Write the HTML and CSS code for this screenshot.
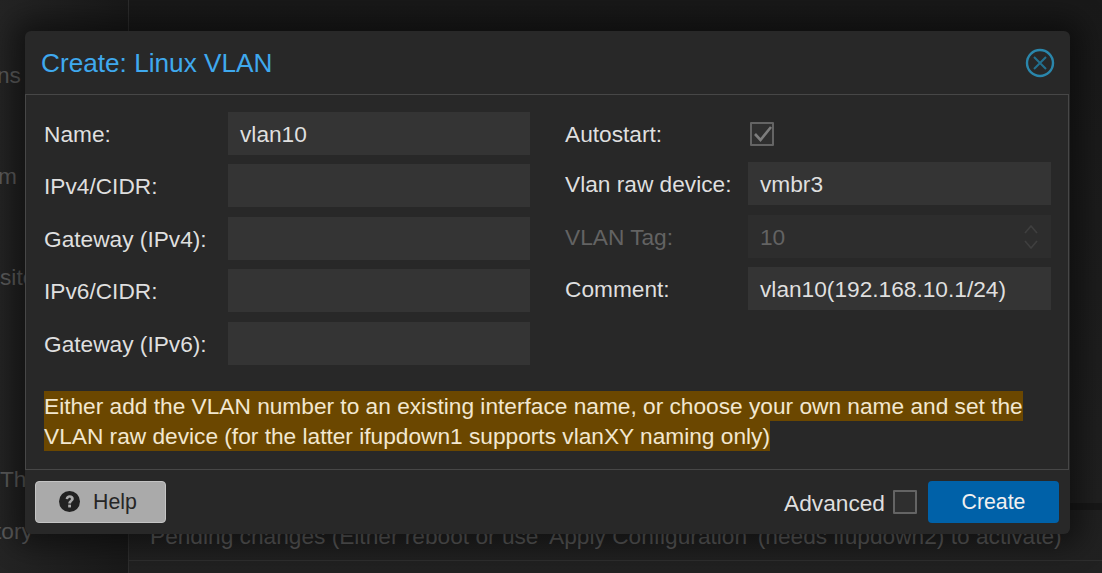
FILE: index.html
```html
<!DOCTYPE html>
<html lang="en">
  <head>
    <meta charset="UTF-8" />
    <title>Create: Linux VLAN</title>
    <link rel="stylesheet" href="styles.css">
  </head>

  <body>
    <div class="backdrop">
      <div class="side">
        <div class="side-text t1">ns</div>
        <div class="side-text t2">m</div>
        <div class="side-text t3">sito</div>
        <div class="side-text t4">Th</div>
        <div class="side-text t5">tory</div>
      </div>
      <div class="main">
        <div class="toolbar-line"></div>
        <div class="pending">Pending changes (Either reboot or use 'Apply Configuration' (needs ifupdown2) to activate)</div>
      </div>
    </div>

    <div class="window">
      <div class="header">
        <span class="title">Create: Linux VLAN</span>
        <svg class="close" viewBox="0 0 30 30" width="30" height="30">
          <circle cx="15" cy="15" r="13" fill="none" stroke="#2a86ab" stroke-width="2.4" />
          <path d="M9 9 L21 21 M21 9 L9 21" fill="none" stroke="#23708f" stroke-width="2" />
        </svg>
      </div>

      <div class="body">
        <div class="columns">
          <div class="column left">
            <div class="row">
              <label>Name:</label>
              <div class="input">vlan10</div>
            </div>
            <div class="row">
              <label>IPv4/CIDR:</label>
              <div class="input"></div>
            </div>
            <div class="row">
              <label>Gateway (IPv4):</label>
              <div class="input"></div>
            </div>
            <div class="row">
              <label>IPv6/CIDR:</label>
              <div class="input"></div>
            </div>
            <div class="row">
              <label>Gateway (IPv6):</label>
              <div class="input"></div>
            </div>
          </div>

          <div class="column right">
            <div class="row check-row">
              <label>Autostart:</label>
              <div class="checkbox">
                <svg viewBox="0 0 24 24" width="24" height="24">
                  <path d="M5 12 L10.5 18 L21 5" fill="none" stroke="#7d7d7d" stroke-width="2.6" />
                </svg>
              </div>
            </div>
            <div class="row">
              <label>Vlan raw device:</label>
              <div class="input">vmbr3</div>
            </div>
            <div class="row disabled">
              <label>VLAN Tag:</label>
              <div class="input">
                10
                <svg class="spin" viewBox="0 0 16 30" width="16" height="30">
                  <path d="M2 11 L8 4 L14 11 M2 19 L8 26 L14 19" fill="none" stroke="#3f3f3f" stroke-width="1.6" />
                </svg>
              </div>
            </div>
            <div class="row">
              <label>Comment:</label>
              <div class="input">vlan10(192.168.10.1/24)</div>
            </div>
          </div>
        </div>

        <p class="warning"><span>Either add the VLAN number to an existing interface name, or choose your own name and set the VLAN raw device (for the latter ifupdown1 supports vlanXY naming only)</span></p>
      </div>

      <div class="footer">
        <button class="btn help">
          <svg viewBox="0 0 24 24" width="21" height="21">
            <circle cx="12" cy="12" r="12" fill="#222" />
            <path d="M7.6 9.2 C7.6 6.4 9.8 4.8 12.3 4.8 C15 4.8 16.9 6.4 16.9 8.8 C16.9 11.6 13.8 11.8 13.8 14.4 H10.6 C10.6 10.8 13.6 10.6 13.6 9 C13.6 8.2 13 7.7 12.1 7.7 C11.1 7.7 10.6 8.3 10.4 9.5 Z" fill="#aaa" />
            <rect x="10.5" y="15.6" width="3.2" height="3.2" fill="#aaa" />
          </svg>
          <span>Help</span>
        </button>
        <div class="actions">
          <span class="adv-label">Advanced</span>
          <div class="checkbox empty"></div>
          <button class="btn create">Create</button>
        </div>
      </div>
    </div>
  </body>
</html>
```

FILE: styles.css
```css
* {
  margin: 0;
  padding: 0;
  box-sizing: border-box;
  font-family: "Liberation Sans", Arial, sans-serif;
}

html,
body {
  width: 1102px;
  height: 573px;
  overflow: hidden;
}

body {
  background-color: #1d1d1d;
  font-size: 22.7px;
  color: #dfdfdf;
}

.backdrop {
  display: flex;
  height: 573px;
}

.side {
  position: relative;
  width: 129px;
  border-right: 1px solid #2d2d2d;
  background: linear-gradient(90deg, #242424, #191919);
}

.side-text {
  position: absolute;
  color: #5c5c5c;
}

.t1 { top: 62px; left: -3px; }
.t2 { top: 163px; left: -2px; }
.t3 { top: 264px; left: 0; }
.t4 { top: 466px; left: 0; }
.t5 { top: 518px; left: -5px; }

.main {
  position: relative;
  flex: 1;
  display: flex;
  align-items: flex-end;
  padding-bottom: 12px;
  background: linear-gradient(180deg, #191919, #212121);
}

.toolbar-line {
  position: absolute;
  left: 0;
  right: 0;
  top: 503px;
  height: 7px;
  background-color: #181818;
}

.pending {
  position: relative;
  width: 100%;
  height: 38px;
  padding: 0 0 0 21px;
  border-bottom: 1px solid #2e2e2e;
  color: #595959;
  white-space: nowrap;
}

.window {
  position: absolute;
  left: 25px;
  top: 31px;
  width: 1045px;
  height: 503px;
  background-color: #282828;
  border-radius: 6px;
  box-shadow: 0 0 28px 12px rgba(0, 0, 0, 0.45);
  display: flex;
  flex-direction: column;
}

.header {
  height: 63px;
  flex-shrink: 0;
  display: flex;
  align-items: center;
  justify-content: space-between;
  padding: 0 15px 0 16px;
}

.title {
  padding-top: 2px;
  font-size: 26.2px;
  color: #3fa9ee;
}

.close {
  display: block;
}

.body {
  flex: 1;
  margin: 0 1px 0 0;
  padding: 17px 17px 0 18px;
  border: 1px solid #474747;
}

.columns {
  display: flex;
  height: 261px;
}

.column {
  display: flex;
  flex-direction: column;
  flex-shrink: 0;
}

.column.left {
  width: 502px;
  row-gap: 9.4px;
}

.column.right {
  width: 486px;
  margin-left: 19px;
  row-gap: 9.4px;
  padding-top: 50px;
}

.row {
  display: flex;
  align-items: center;
  height: 43px;
}

.row label {
  width: 184px;
  flex-shrink: 0;
  padding-top: 2px;
}

.column.right .row label {
  width: 183px;
}

.input {
  position: relative;
  height: 43px;
  line-height: 45px;
  padding-left: 12px;
  background-color: #343434;
  color: #dfdfdf;
}

.column.left .input {
  width: 302px;
}

.column.right .input {
  width: 303px;
}

.check-row {
  margin-top: -50px;
  margin-bottom: -2px;
}

.checkbox {
  width: 24px;
  height: 24px;
  margin-left: 2px;
  border: 2px solid #646464;
  background-color: #2f2f2f;
  border-radius: 1px;
}

.checkbox svg {
  display: block;
  margin: -2px;
}

.disabled label {
  color: #636363;
}

.disabled .input {
  background-color: #2d2d2d;
  color: #636363;
}

.spin {
  position: absolute;
  right: 12px;
  top: 7px;
}

.warning {
  width: 990px;
  margin-top: 18px;
  line-height: 30px;
  color: #f2e7d0;
}

.warning span {
  background-color: #6b4700;
  padding: 2px 0;
}

.footer {
  height: 64px;
  flex-shrink: 0;
  display: flex;
  align-items: center;
  justify-content: space-between;
  padding: 0 11px 1px 10px;
}

.btn {
  width: 131px;
  height: 42px;
  border-radius: 4px;
  font-size: 21.3px;
  cursor: pointer;
}

.help {
  display: flex;
  align-items: center;
  justify-content: center;
  gap: 13px;
  padding-right: 5px;
  background-color: #aaaaaa;
  border: 1px solid #c4c4c4;
  color: #262626;
}

.help span {
  padding-top: 1px;
}

.actions {
  display: flex;
  align-items: center;
}

.adv-label {
  padding-top: 3px;
  color: #dfdfdf;
}

.checkbox.empty {
  margin: 0 11px 0 8px;
}

.create {
  padding-top: 2px;
  background-color: #0061a8;
  border: none;
  color: #f0f0f0;
}
```
